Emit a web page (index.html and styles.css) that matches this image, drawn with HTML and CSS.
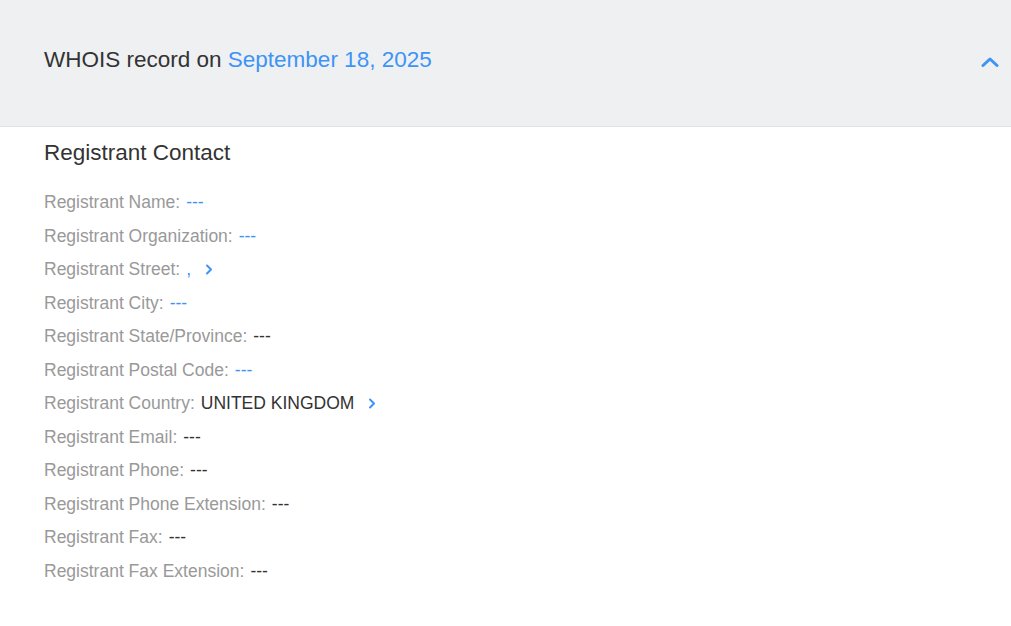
FILE: index.html
```html
<!DOCTYPE html>
<html>
<head>
<meta charset="utf-8">
<link rel="stylesheet" href="styles.css">
</head>
<body>
<div class="record">
  <div class="record-head">
    <h2 class="record-title">WHOIS record on <span class="date">September 18, 2025</span></h2>
    <svg class="collapse" width="18" height="12" viewBox="0 0 18 12"><path d="M2 9.5 L9 3 L16 9.5" fill="none" stroke="#3d94f6" stroke-width="3" stroke-linecap="round" stroke-linejoin="round"/></svg>
  </div>
  <div class="record-body">
    <h3 class="section-title">Registrant Contact</h3>
    <ul class="fields">
      <li><span class="label">Registrant Name:</span><span class="val link">---</span></li>
      <li><span class="label">Registrant Organization:</span><span class="val link">---</span></li>
      <li><span class="label">Registrant Street:</span><span class="val link">,</span><svg class="more" width="8" height="11" viewBox="0 0 8 11"><path d="M2 1.5 L6 5.5 L2 9.5" fill="none" stroke="#3d94f6" stroke-width="2" stroke-linecap="round" stroke-linejoin="round"/></svg></li>
      <li><span class="label">Registrant City:</span><span class="val link">---</span></li>
      <li><span class="label">Registrant State/Province:</span><span class="val">---</span></li>
      <li><span class="label">Registrant Postal Code:</span><span class="val link">---</span></li>
      <li><span class="label">Registrant Country:</span><span class="val">UNITED KINGDOM</span><svg class="more" width="8" height="11" viewBox="0 0 8 11"><path d="M2 1.5 L6 5.5 L2 9.5" fill="none" stroke="#3d94f6" stroke-width="2" stroke-linecap="round" stroke-linejoin="round"/></svg></li>
      <li><span class="label">Registrant Email:</span><span class="val">---</span></li>
      <li><span class="label">Registrant Phone:</span><span class="val">---</span></li>
      <li><span class="label">Registrant Phone Extension:</span><span class="val">---</span></li>
      <li><span class="label">Registrant Fax:</span><span class="val">---</span></li>
      <li><span class="label">Registrant Fax Extension:</span><span class="val">---</span></li>
    </ul>
  </div>
</div>
</body>
</html>
```
FILE: styles.css
```css
* { box-sizing: border-box; }
html, body { margin: 0; padding: 0; background: #fff; }
body { font-family: "Liberation Sans", Arial, sans-serif; color: #333; }
.record-head {
  background: #eff0f2;
  border-bottom: 1px solid #e0e2e5;
  height: 127px;
  display: flex;
  align-items: flex-start;
  justify-content: space-between;
  padding: 45px 12px 0 44px;
}
.record-title {
  margin: 0;
  font-size: 22.5px;
  font-weight: normal;
  color: #333;
  line-height: 30px;
}
.date { color: #3d94f6; }
.collapse { margin-top: 11px; }
.record-body { padding: 12px 44px 0; }
.section-title {
  margin: 0 0 19px;
  font-size: 22.5px;
  font-weight: normal;
  color: #333;
  line-height: 28px;
}
.fields { list-style: none; margin: 0; padding: 0; }
.fields li {
  font-size: 17.5px;
  line-height: 33.5px;
  height: 33.5px;
  display: flex;
  align-items: center;
  white-space: nowrap;
}
.label { color: #999; margin-right: 6px; }
.val { color: #333; }
.val.link { color: #3d94f6; }
.more { margin-left: 14px; }
```
